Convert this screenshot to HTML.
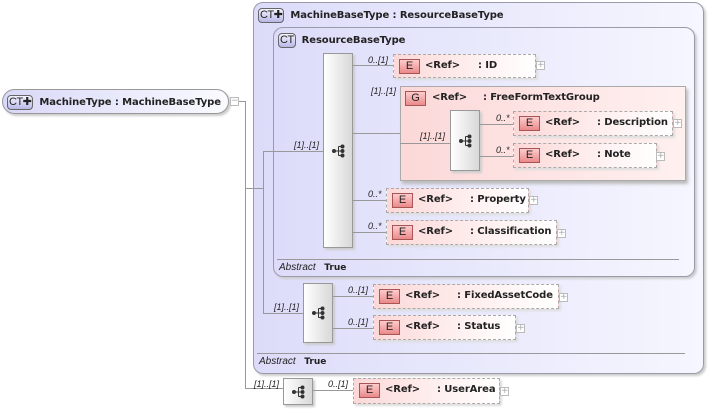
<!DOCTYPE html>
<html><head><meta charset="utf-8"><style>
*{margin:0;padding:0;box-sizing:border-box}
body{width:708px;height:409px;background:#fff;position:relative;overflow:hidden;font-family:"DejaVu Sans","Liberation Sans",sans-serif;font-size:10px;color:#222}
.a{position:absolute}
.ct{border:1px solid #9a9aaa;border-radius:10px;background:linear-gradient(to right,#dcdcfa,#f6f6ff);box-shadow:2px 2px 2px #ccc}
.hd{position:absolute;font-weight:bold;font-size:10px;white-space:nowrap;letter-spacing:-0.1px}
.badge{display:inline-block;border:1px solid #666;border-radius:4px;background:linear-gradient(#f4f4ff,#b8b8e8);font-size:11px;font-weight:normal;padding:0 1px;line-height:13px;margin-right:6px;color:#222;font-family:"Liberation Sans",sans-serif;letter-spacing:-0.5px}
.el{position:absolute;border:1px dashed #aaa;background:linear-gradient(to right,#fcd8d8,#fff4f4 70%,#fff);box-shadow:2px 2px 2px #ddd}
.eb{position:absolute;left:5px;top:4px;width:21px;height:15px;border:1px solid #a55;background:linear-gradient(#fcc,#ea8a8a);text-align:center;font-size:11px;line-height:13px;font-family:"Liberation Sans",sans-serif}
.r{position:absolute;left:31px;top:5px;font-weight:bold;white-space:nowrap;letter-spacing:-0.1px}
.n{position:absolute;top:5px;font-weight:bold;white-space:nowrap;letter-spacing:-0.1px}
.pl{position:absolute;width:9px;height:9px;border:1px solid #bbb;background:#fff;font-size:9px;line-height:7px;text-align:center;color:#aaa}
.sq{position:absolute;border:1px solid #999;background:linear-gradient(to right,#fff,#d8d8d8);box-shadow:2px 2px 2px #ccc}
.hl{position:absolute;height:1px;background:#999}
.vl{position:absolute;width:1px;background:#999}
.m{position:absolute;font-size:9px;font-style:italic;white-space:nowrap;font-family:"Liberation Sans",sans-serif}
.ab{position:absolute;font-size:9px;white-space:nowrap}
.ab i{font-family:"Liberation Sans",sans-serif;font-size:10px}
</style></head><body>
<svg width="0" height="0" style="position:absolute"><defs><g id="ic"><circle cx="2" cy="7" r="2" fill="#333"/><path d="M2 7H6.5M6.5 2.5V11.5M6.5 2.5H10M6.5 7H10M6.5 11.5H10" stroke="#333" fill="none"/><circle cx="10.5" cy="2.5" r="2" fill="#333"/><circle cx="10.5" cy="7" r="2" fill="#333"/><circle cx="10.5" cy="11.5" r="2" fill="#333"/></g></defs></svg>

<div class="a ct" style="left:253px;top:2px;width:451px;height:372px"></div>
<div class="hd" style="left:258px;top:8px"><span class="badge">CT✚</span>MachineBaseType : ResourceBaseType</div>
<div class="a ct" style="left:273px;top:27px;width:422px;height:250px"></div>
<div class="hd" style="left:278px;top:33px"><span class="badge">CT</span>ResourceBaseType</div>
<div class="hl" style="left:277px;top:259px;width:402px"></div>
<div class="ab" style="left:279px;top:262px"><i>Abstract</i>&nbsp;&nbsp;&nbsp;<b>True</b></div>
<div class="hl" style="left:257px;top:353px;width:428px"></div>
<div class="ab" style="left:259px;top:356px"><i>Abstract</i>&nbsp;&nbsp;&nbsp;<b>True</b></div>

<div class="a" style="left:2px;top:89px;width:227px;height:25px;border:1px solid #999;border-radius:13px;background:linear-gradient(to right,#d8d8f8,#fafaff);box-shadow:2px 2px 2px #ccc"></div>
<div class="hd" style="left:7px;top:95px"><span class="badge">CT✚</span>MachineType : MachineBaseType</div>
<div class="pl" style="left:230px;top:97px">−</div>

<div class="hl" style="left:239px;top:101px;width:7px"></div>
<div class="vl" style="left:245px;top:101px;height:287px"></div>
<div class="hl" style="left:245px;top:188px;width:18px"></div>
<div class="vl" style="left:263px;top:151px;height:163px"></div>
<div class="hl" style="left:263px;top:151px;width:60px"></div>
<div class="m" style="left:294px;top:140px">[1]..[1]</div>
<div class="hl" style="left:263px;top:313px;width:40px"></div>
<div class="m" style="left:274px;top:302px">[1]..[1]</div>
<div class="hl" style="left:245px;top:388px;width:38px"></div>
<div class="m" style="left:254px;top:379px">[1]..[1]</div>

<div class="sq" style="left:323px;top:53px;width:30px;height:195px"><svg class="a" style="left:8px;top:90px" width="13" height="14"><use href="#ic"/></svg></div>
<div class="hl" style="left:353px;top:65px;width:40px"></div><div class="m" style="left:368px;top:55px">0..[1]</div>
<div class="hl" style="left:353px;top:133px;width:47px"></div><div class="m" style="left:371px;top:86px">[1]..[1]</div>
<div class="hl" style="left:353px;top:200px;width:33px"></div><div class="m" style="left:368px;top:189px">0..*</div>
<div class="hl" style="left:353px;top:232px;width:33px"></div><div class="m" style="left:368px;top:221px">0..*</div>

<div class="el" style="left:393px;top:54px;width:143px;height:24px"><div class="eb">E</div><div class="r">&lt;Ref&gt;</div><div class="n" style="left:84px">: ID</div></div>
<div class="pl" style="left:536px;top:61px">+</div>

<div class="a" style="left:400px;top:86px;width:286px;height:95px;border:1px solid #aaa;background:linear-gradient(to right,#fcd8d8,#fff0f0);box-shadow:2px 3px 3px #bbb"></div>
<div class="a" style="left:405px;top:91px;width:21px;height:15px;border:1px solid #a55;background:linear-gradient(#fcc,#ea8a8a);text-align:center;font-size:11px;line-height:13px;font-family:'Liberation Sans',sans-serif">G</div>
<div class="hd" style="left:432px;top:92px">&lt;Ref&gt;</div>
<div class="hd" style="left:483px;top:92px">: FreeFormTextGroup</div>
<div class="hl" style="left:400px;top:143px;width:50px"></div><div class="m" style="left:420px;top:131px">[1]..[1]</div>
<div class="sq" style="left:450px;top:110px;width:30px;height:61px"><svg class="a" style="left:8px;top:23px" width="13" height="14"><use href="#ic"/></svg></div>
<div class="hl" style="left:480px;top:124px;width:33px"></div><div class="m" style="left:496px;top:113px">0..*</div>
<div class="hl" style="left:480px;top:156px;width:33px"></div><div class="m" style="left:496px;top:145px">0..*</div>
<div class="el" style="left:513px;top:111px;width:160px;height:25px"><div class="eb">E</div><div class="r">&lt;Ref&gt;</div><div class="n" style="left:83px">: Description</div></div>
<div class="pl" style="left:673px;top:119px">+</div>
<div class="el" style="left:513px;top:143px;width:144px;height:25px"><div class="eb">E</div><div class="r">&lt;Ref&gt;</div><div class="n" style="left:83px">: Note</div></div>
<div class="pl" style="left:656px;top:152px">+</div>

<div class="el" style="left:386px;top:188px;width:143px;height:25px"><div class="eb">E</div><div class="r">&lt;Ref&gt;</div><div class="n" style="left:83px">: Property</div></div>
<div class="pl" style="left:529px;top:196px">+</div>
<div class="el" style="left:386px;top:220px;width:171px;height:25px"><div class="eb">E</div><div class="r">&lt;Ref&gt;</div><div class="n" style="left:83px">: Classification</div></div>
<div class="pl" style="left:557px;top:229px">+</div>

<div class="sq" style="left:303px;top:283px;width:30px;height:60px"><svg class="a" style="left:8px;top:22px" width="13" height="14"><use href="#ic"/></svg></div>
<div class="hl" style="left:333px;top:296px;width:40px"></div><div class="m" style="left:348px;top:285px">0..[1]</div>
<div class="hl" style="left:333px;top:328px;width:40px"></div><div class="m" style="left:348px;top:317px">0..[1]</div>
<div class="el" style="left:373px;top:284px;width:186px;height:25px"><div class="eb">E</div><div class="r">&lt;Ref&gt;</div><div class="n" style="left:83px">: FixedAssetCode</div></div>
<div class="pl" style="left:559px;top:293px">+</div>
<div class="el" style="left:373px;top:315px;width:143px;height:25px"><div class="eb">E</div><div class="r">&lt;Ref&gt;</div><div class="n" style="left:83px">: Status</div></div>
<div class="pl" style="left:516px;top:324px">+</div>

<div class="sq" style="left:283px;top:378px;width:30px;height:27px"><svg class="a" style="left:8px;top:6px" width="13" height="14"><use href="#ic"/></svg></div>
<div class="hl" style="left:313px;top:390px;width:40px"></div><div class="m" style="left:328px;top:379px">0..[1]</div>
<div class="el" style="left:353px;top:378px;width:147px;height:26px"><div class="eb">E</div><div class="r">&lt;Ref&gt;</div><div class="n" style="left:83px">: UserArea</div></div>
<div class="pl" style="left:500px;top:387px">+</div>
</body></html>
